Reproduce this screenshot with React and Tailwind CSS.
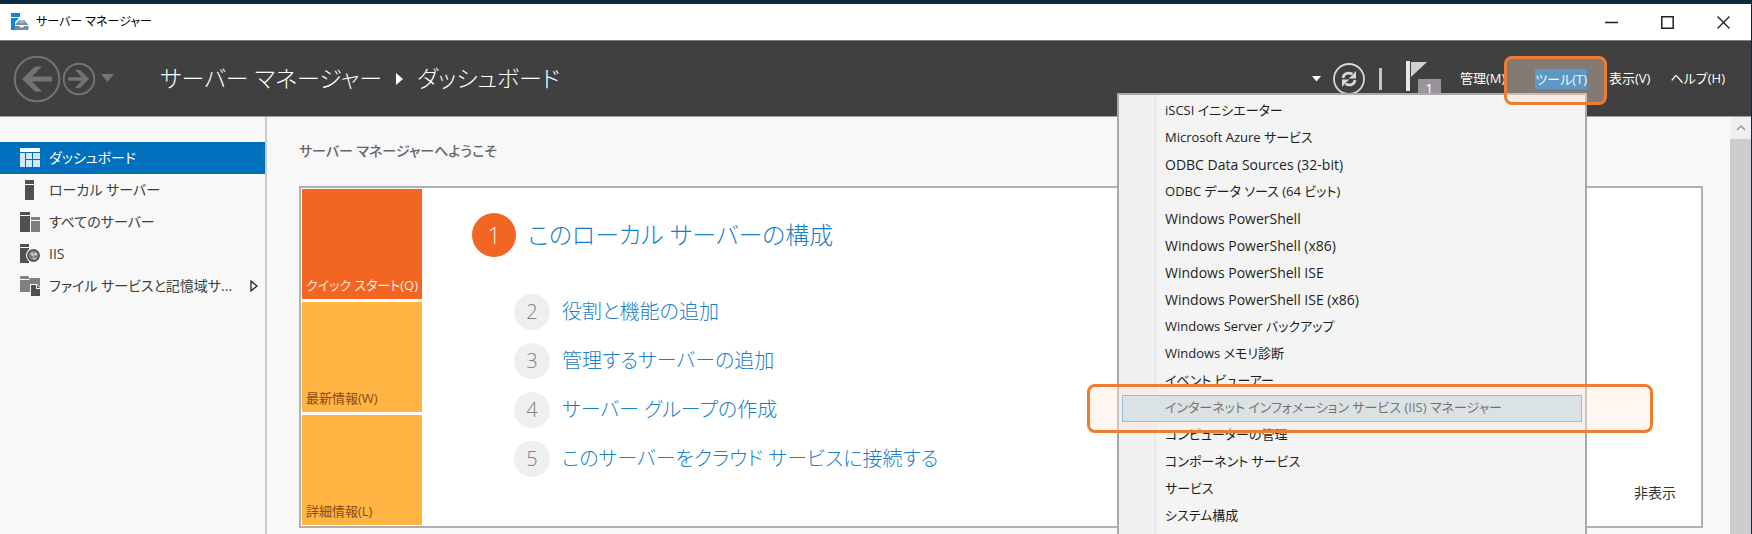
const tools = [
  "iSCSI イニシエーター",
  "Microsoft Azure サービス",
  "ODBC Data Sources (32-bit)",
  "ODBC データ ソース (64 ビット)",
  "Windows PowerShell",
  "Windows PowerShell (x86)",
  "Windows PowerShell ISE",
  "Windows PowerShell ISE (x86)",
  "Windows Server バックアップ",
  "Windows メモリ診断",
  "イベント ビューアー",
  "インターネット インフォメーション サービス (IIS) マネージャー",
  "コンピューターの管理",
  "コンポーネント サービス",
  "サービス",
  "システム構成",
];

const highlighted = 11;

const hasKana = (text) => /[\u3040-\u30ff]/.test(text);

function AppIcon() {
  return (
    <svg width="18" height="18" viewBox="0 0 18 18" aria-hidden="true">
      <path d="M0 0h9v4H0z" fill="#1583d8" />
      <path d="M0 5h8L4 9v8H0z" fill="#1583d8" />
      <path d="M7.500 10V8.200h6V10" fill="none" stroke="#6f8fa3" strokeWidth="1.300" />
      <path d="M4 12l2-2.500h9.500L17.500 12zM4 13h5v1.500h3.500V13h5v4H4z" fill="#6f8fa3" />
    </svg>
  );
}

function DashboardIcon() {
  return (
    <svg className="shrink-0" width="22" height="22" viewBox="0 0 22 22" aria-hidden="true">
      <path d="M1 1h20v4H1z" fill="#fff" />
      <path d="M1 6h5v14H1zM7 6h6v6H7zM14 6h7v6h-7zM7 13h6v7H7zM14 13h7v7h-7z" fill="#d3e8f7" />
    </svg>
  );
}

function ServerIcon() {
  return (
    <svg className="shrink-0" width="22" height="22" viewBox="0 0 22 22" aria-hidden="true">
      <path d="M6 1h9v4H6zM6 6h9v15H6z" fill="#505050" />
    </svg>
  );
}

function ServersIcon() {
  return (
    <svg className="shrink-0" width="22" height="22" viewBox="0 0 22 22" aria-hidden="true">
      <path d="M1 1h10v3H1zM1 5h10v16H1z" fill="#505050" />
      <path d="M12 6h9v3h-9zM12 10h9v11h-9z" fill="#7d7d7d" />
    </svg>
  );
}

function IisIcon() {
  return (
    <svg className="shrink-0" width="22" height="22" viewBox="0 0 22 22" aria-hidden="true">
      <path d="M1 1h9v3H1zM1 5h9v15H1z" fill="#505050" />
      <circle cx="14.500" cy="12.500" r="7.500" fill="#f8f8f8" />
      <circle cx="14.500" cy="12.500" r="5.700" fill="#7a7a7a" stroke="#505050" strokeWidth="1.500" />
      <path d="M11 11l2.500-2 1 2 2-2 2 2-1 2-2-1-1 2z" fill="#c4c4c4" />
      <path d="M13 15l3-.5 1.500 1-2 1.500z" fill="#c4c4c4" />
    </svg>
  );
}

function FilesIcon() {
  return (
    <svg className="shrink-0" width="22" height="22" viewBox="0 0 22 22" aria-hidden="true">
      <path d="M1 2l1-1h7l1 1v2H1zM1 5h9l1-2h10v14H1z" fill="#808080" />
      <path d="M11 9h7l4 4v9H11z" fill="#f8f8f8" />
      <path d="M12 10h5v4h4v7h-9z" fill="#505050" />
      <path d="M18 10l3 3h-3z" fill="#505050" />
    </svg>
  );
}

const nav = [
  { label: "ダッシュボード", Icon: DashboardIcon, active: true },
  { label: "ローカル サーバー", Icon: ServerIcon },
  { label: "すべてのサーバー", Icon: ServersIcon },
  { label: "IIS", Icon: IisIcon },
  { label: "ファイル サービスと記憶域サ...", Icon: FilesIcon, more: true },
];

const tiles = [
  { label: "クイック スタート(Q)", style: "bg-[#f26522] text-[#ffe9dc]" },
  { label: "最新情報(W)", style: "bg-[#ffb444] text-[#8b4a12]" },
  { label: "詳細情報(L)", style: "bg-[#ffb444] text-[#8b4a12]" },
];

const steps = [
  "役割と機能の追加",
  "管理するサーバーの追加",
  "サーバー グループの作成",
  "このサーバーをクラウド サービスに接続する",
];

function TitleBar() {
  return (
    <div className="flex h-9 shrink-0 items-center bg-white pl-[11px]">
      <AppIcon />
      <span className="ml-[7px] text-xs text-black">サーバー マネージャー</span>
      <div className="ml-auto flex text-[#222]">
        <button aria-label="最小化" className="flex h-9 w-14 items-center justify-center">
          <svg width="13" height="13" viewBox="0 0 13 13"><path d="M0 6.500h13" stroke="currentColor" strokeWidth="1.500" /></svg>
        </button>
        <button aria-label="最大化" className="flex h-9 w-14 items-center justify-center">
          <svg width="13" height="13" viewBox="0 0 13 13"><path d="M.8.8h11.400v11.400H.8z" fill="none" stroke="currentColor" strokeWidth="1.500" /></svg>
        </button>
        <button aria-label="閉じる" className="flex h-9 w-14 items-center justify-center">
          <svg width="13" height="13" viewBox="0 0 13 13"><path d="M.5.5l12 12M12.500.5l-12 12" stroke="currentColor" strokeWidth="1.400" /></svg>
        </button>
      </div>
    </div>
  );
}

function ToolsMenu() {
  return (
    <ul
      role="menu"
      className="absolute top-6 right-0 z-10 w-[470px] border-2 border-[#a9a9a9] bg-[linear-gradient(to_right,#f0f0f0_36px,#e2e2e2_36px,#e2e2e2_37px,#f4f4f4_37px)] px-[3px] pt-[3px] pb-8 text-[#1e1e1e]"
    >
      {tools.map((name, i) => (
        <li key={name} role="none" className="relative">
          <button
            role="menuitem"
            className={
              "flex h-[27px] w-full items-center border pl-[42px] text-left whitespace-nowrap " +
              (hasKana(name) ? "text-[13px] " : "text-sm ") +
              (i === highlighted ? "border-[#3fa9dc] bg-[#c3dde9]" : "border-transparent")
            }
          >
            {name}
          </button>
          {i === highlighted && (
            <span className="pointer-events-none absolute -inset-y-[11px] -right-[71px] -left-[35px] z-10 rounded-lg border-[3px] border-[#ed7d31] bg-[#ffe9dc]/40" />
          )}
        </li>
      ))}
    </ul>
  );
}

function Header() {
  return (
    <header className="flex h-[77px] shrink-0 items-center border-t border-b border-t-[#808080] border-b-[#a0a0a0] bg-[#404040] pr-[26px] pl-[13px] text-white">
      <button aria-label="戻る">
        <svg width="48" height="48" viewBox="0 0 48 48" fill="none" stroke="#737373">
          <circle cx="24" cy="24" r="22.300" strokeWidth="2" />
          <path d="M39 24H14" strokeWidth="5" />
          <path d="M9 24L22 11.500h7L16.500 24L29 36.500h-7z" fill="#737373" stroke="none" />
        </svg>
      </button>
      <button aria-label="進む" className="ml-px">
        <svg width="34" height="34" viewBox="0 0 34 34" fill="none" stroke="#737373">
          <circle cx="17" cy="17" r="15.300" strokeWidth="2" />
          <path d="M6 17h18" strokeWidth="3.500" />
          <path d="M27 17L18 8h-5L21.500 17L13 26H18z" fill="#737373" stroke="none" />
        </svg>
      </button>
      <button aria-label="履歴" className="ml-1">
        <svg width="15" height="9" viewBox="0 0 15 9"><path d="M1 0h13L7.500 8z" fill="#737373" /></svg>
      </button>
      <h1 className="ml-[45px] flex items-center text-[23px] font-light whitespace-nowrap">
        サーバー マネージャー
        <svg className="mx-3.5" width="7" height="12" viewBox="0 0 7 12" aria-hidden="true"><path d="M0 0l7 6l-7 6z" fill="#fff" /></svg>
        ダッシュボード
      </h1>
      <div className="ml-auto flex items-center text-[13px] whitespace-nowrap">
        <button aria-label="オプション">
          <svg width="9" height="6" viewBox="0 0 9 6"><path d="M0 0h9L4.500 5.500z" fill="#fff" /></svg>
        </button>
        <button aria-label="更新" className="ml-3">
          <svg width="32" height="32" viewBox="0 0 32 32" fill="none" stroke="#d8d8d8">
            <circle cx="16" cy="16" r="15" strokeWidth="1.800" />
            <path d="M10 15c.5-4.500 5-6 9.500-4M22 17c-.5 4.500-5 6-9.500 4" strokeWidth="2.600" />
            <path d="M23 8v7.500h-7.500l3-2.500zM9 24v-7.500h7.500l-3 2.500z" fill="#d8d8d8" stroke="none" />
          </svg>
        </button>
        <span className="ml-3.5 h-[22px] w-[3px] bg-[#c4c4c4]" />
        <button aria-label="通知" className="relative ml-6 flex h-9 w-9 items-start">
          <svg width="22" height="32" viewBox="0 0 22 32"><path d="M0 0h4v30H0z" fill="#e6e6e6" /><path d="M5 1h16L5 16z" fill="#d0d0d0" /></svg>
          <span className="absolute top-[18px] left-3 h-5 w-[23px] bg-[#97959b] text-center text-sm text-white">1</span>
        </button>
        <button className="ml-[18px]">管理(M)</button>
        <div className="relative ml-[30px]">
          <button aria-haspopup="menu" aria-expanded="true" className="block h-5 bg-[#0070bc] leading-5">
            ツール(T)
          </button>
          <ToolsMenu />
          <span className="pointer-events-none absolute -top-[13px] -right-5 -bottom-4 -left-[31px] z-20 rounded-lg border-[3px] border-[#ed7d31] bg-[#fbe0d0]/36" />
        </div>
        <button className="ml-[22px]">表示(V)</button>
        <button className="ml-5">ヘルプ(H)</button>
      </div>
    </header>
  );
}

function Sidebar() {
  return (
    <nav className="w-[267px] shrink-0 border-r-2 border-[#cbcbcb] pt-[25px]">
      {nav.map(({ label, Icon, active, more }) => (
        <a
          key={label}
          href="#"
          className={
            "flex h-8 items-center pr-[7px] pl-[19px] text-sm whitespace-nowrap " +
            (active ? "bg-[#0070bc] text-white" : "text-[#3c3c3c]")
          }
        >
          <Icon />
          <span className="ml-2">{label}</span>
          {more && (
            <svg className="ml-auto shrink-0" width="8" height="12" viewBox="0 0 8 12" aria-hidden="true">
              <path d="M1 1.200v9.600L7 6z" fill="none" stroke="#222" strokeWidth="1.300" />
            </svg>
          )}
        </a>
      ))}
    </nav>
  );
}

function Welcome() {
  return (
    <section className="mt-[23px] flex border-2 border-[#b0b0b0] bg-white p-px">
      <div className="flex w-[120px] shrink-0 flex-col gap-[3px]">
        {tiles.map(({ label, style }) => (
          <button key={label} className={"flex h-[110px] items-end px-1 pb-1 text-left text-[13px] whitespace-nowrap " + style}>
            {label}
          </button>
        ))}
      </div>
      <div className="flex-1 pt-6 pl-[50px] font-light text-[#1a7fca]">
        <a href="#" className="flex h-11 items-center gap-3 text-2xl">
          <span className="flex size-11 items-center justify-center rounded-full bg-[#f26522] text-[#ffe9dc]">1</span>
          このローカル サーバーの構成
        </a>
        <ol start="2" className="mt-[37px] ml-[42px] flex flex-col gap-[13px]">
          {steps.map((step, i) => (
            <li key={step}>
              <a href="#" className="flex h-9 items-center gap-3 text-xl">
                <span className="flex size-9 items-center justify-center rounded-full bg-[#efefef] text-[#808080]">{i + 2}</span>
                {step}
              </a>
            </li>
          ))}
        </ol>
      </div>
      <button className="mr-6 mb-[22px] self-end text-sm text-[#333]">非表示</button>
    </section>
  );
}

export default function App() {
  return (
    <div className="flex h-screen flex-col overflow-hidden border-t-4 border-r border-[#0d2b3a] bg-[#f8f8f8] font-['Open_Sans','Noto_Sans_CJK_JP',sans-serif] [font-feature-settings:'palt']">
      <TitleBar />
      <Header />
      <div className="flex min-h-0 flex-1">
        <Sidebar />
        <main className="min-w-0 flex-1 pt-[22px] pr-[27px] pl-8">
          <h2 className="h-6 text-sm leading-6 font-medium text-[#666]">サーバー マネージャーへようこそ</h2>
          <Welcome />
        </main>
        <div className="flex w-[21px] shrink-0 flex-col bg-[#cdcdcd]">
          <button aria-label="上へスクロール" className="flex h-[22px] items-center justify-center bg-[#f0f0f0]">
            <svg width="10" height="6" viewBox="0 0 10 6"><path d="M1 5l4-4l4 4" fill="none" stroke="#999" strokeWidth="1.500" /></svg>
          </button>
        </div>
      </div>
    </div>
  );
}
